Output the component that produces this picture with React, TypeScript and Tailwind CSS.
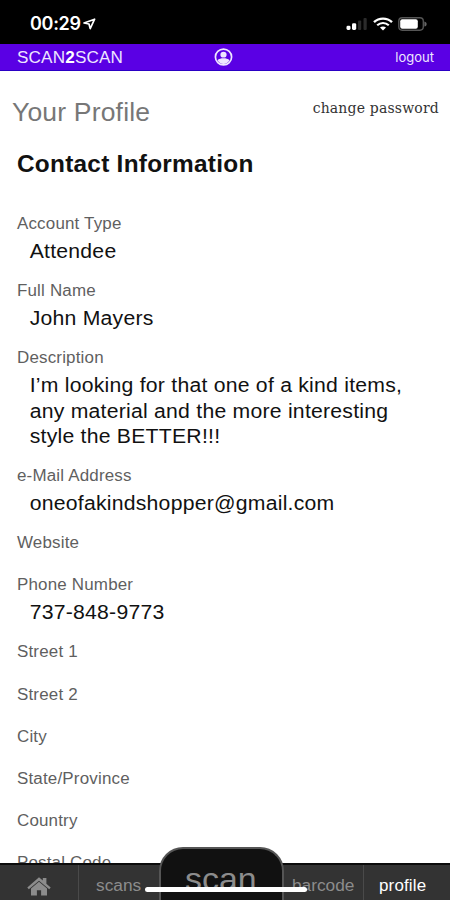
import React from 'react';

type Field = {
  label: string;
  lines?: string[];
};

const fields: Field[] = [
  { label: 'Account Type', lines: ['Attendee'] },
  { label: 'Full Name', lines: ['John Mayers'] },
  {
    label: 'Description',
    lines: [
      'I’m looking for that one of a kind items,',
      'any material and the more interesting',
      'style the BETTER!!!',
    ],
  },
  { label: 'e-Mail Address', lines: ['oneofakindshopper@gmail.com'] },
  { label: 'Website' },
  { label: 'Phone Number', lines: ['737-848-9773'] },
  { label: 'Street 1' },
  { label: 'Street 2' },
  { label: 'City' },
  { label: 'State/Province' },
  { label: 'Country' },
  { label: 'Postal Code' },
];

function StatusBar() {
  return (
    <div className="h-11 shrink-0 bg-black text-white flex items-center justify-between pl-[30px] pr-[22px] pt-[3px]">
      <div className="flex items-center gap-[4px]">
        <span className="inline-block w-[49px] whitespace-nowrap font-['Inter',sans-serif] font-semibold text-[18px] leading-none tracking-[-0.3px]">
          00:29
        </span>
        <svg width="13" height="12" viewBox="0 0 13 12">
          <path
            d="M1 5 11.6 1.2 7.2 10.6 6 6z"
            fill="none"
            stroke="#fff"
            strokeWidth="1.7"
            strokeLinejoin="round"
          />
        </svg>
      </div>
      <div className="flex items-center">
        <svg width="22" height="14" viewBox="0 0 22 14">
          <rect x="0.5" y="8.7" width="4" height="4.3" rx="1.4" fill="#fff" />
          <rect x="6" y="6.2" width="4.2" height="6.8" rx="1.4" fill="#fff" />
          <rect x="12" y="3.5" width="3.2" height="9.5" rx="1" fill="#2b2b2b" />
          <rect x="17.5" y="1" width="3.2" height="12" rx="1" fill="#2b2b2b" />
        </svg>
        <svg width="20" height="14" viewBox="0 0 20 14" className="ml-[5px]">
          <path d="M1 5.2C6 .4 14 .4 19 5.2" fill="none" stroke="#fff" strokeWidth="2.4" />
          <path d="M4.2 8.3c3.4-3.1 8.2-3.1 11.6 0" fill="none" stroke="#fff" strokeWidth="2.2" />
          <path d="M7 10.6c1.8-1.5 4.2-1.5 6 0L10 13.4z" fill="#fff" />
        </svg>
        <svg width="30" height="14" viewBox="0 0 30 14" className="ml-[5px]">
          <rect x="0.8" y="0.8" width="24.5" height="12.4" rx="3.4" fill="none" stroke="#555" strokeWidth="1.4" />
          <rect x="2.2" y="2.2" width="17.6" height="9.6" rx="2" fill="#fff" />
          <path d="M26.4 4.4c3 .8 3 4.4 0 5.2z" fill="#666" />
        </svg>
      </div>
    </div>
  );
}

function Header() {
  return (
    <div className="h-[27px] shrink-0 bg-[#5a00e4] border-b border-[#2a00c4] text-[#eee6ff] grid grid-cols-3 items-center pl-[17px] pr-4">
      <span className="w-fit origin-left scale-x-[1.07] text-[16px] leading-none tracking-[0.15px] pt-px">
        SCAN<b className="text-white">2</b>SCAN
      </span>
      <svg width="19" height="18" viewBox="0 0 19 18" className="justify-self-center -translate-x-[2px]">
        <ellipse cx="9.5" cy="9" rx="8.1" ry="7.8" fill="none" stroke="#eee6ff" strokeWidth="1.7" />
        <ellipse cx="9.5" cy="6.7" rx="3.1" ry="2.9" fill="#eee6ff" />
        <path d="M3.4 12.3c3-2.6 9.2-2.6 12.2 0-2.6 4.9-9.6 4.9-12.2 0z" fill="#eee6ff" />
      </svg>
      <span className="justify-self-end font-['Inter',sans-serif] text-[13px] leading-none">
        logout
      </span>
    </div>
  );
}

function ProfileField({ label, lines }: Field) {
  return (
    <div className={lines ? 'mb-[18.9px]' : 'mb-[26.1px]'}>
      <p className="text-[16px] leading-[16px] tracking-[0.17px] text-[#5f5f5f]">
        {label}
      </p>
      {lines && (
        <div className="mt-[7.1px] pl-[12px] text-[20px] leading-[25.2px] tracking-[0.22px] text-[#111]">
          {lines.map((line) => (
            <p key={line} className="whitespace-nowrap">
              {line}
            </p>
          ))}
        </div>
      )}
    </div>
  );
}

function BottomNav() {
  return (
    <div className="relative h-[37px] shrink-0 bg-[#333] border-t-2 border-[#0c0c0c] flex text-[#8c8c8c] text-[16px] leading-none">
      <div className="w-[79px] border-r border-[#4a4a4a] flex justify-center pt-[12px]">
        <svg width="24" height="19" viewBox="0 0 24 19" fill="#8c8c8c">
          <path d="M12 .3 15.8 3.6V1h3.6v5.8l4.3 3.7-1.5 1.8L12 3.7 1.8 12.3.3 10.5z" />
          <path d="M12 4.7l8 6.9V18.4h-5.9v-5.2H9.9v5.2H4v-6.8z" />
        </svg>
      </div>
      <div className="w-[81px] pl-[17px] pt-[13px]">
        <span className="inline-block origin-left scale-x-[1.08]">scans</span>
      </div>
      <div className="w-[122px]" />
      <div className="w-[82px] border-r border-[#4a4a4a] pl-[10px] pt-[13px]">
        <span className="inline-block origin-left scale-x-[1.08]">barcode</span>
      </div>
      <div className="flex-1 pl-[15px] pt-[13px] text-white">
        <span className="inline-block origin-left scale-x-[1.06] tracking-[0.15px]">
          profile
        </span>
      </div>

      {/* raised scan button */}
      <div className="absolute left-[159px] bottom-0 w-[125px] h-[53px] rounded-t-[24px] border-2 border-b-0 border-[#555] bg-[#111] flex justify-center overflow-hidden">
        <span className="scale-x-[1.06] -translate-x-px text-[32px] leading-none pt-[14px] text-[#8c8c8c]">
          scan
        </span>
      </div>
      {/* home indicator */}
      <div className="absolute left-[145px] bottom-[8px] w-[162px] h-[5px] rounded-full bg-white" />
    </div>
  );
}

function App() {
  return (
    <div className="w-[450px] h-[900px] overflow-hidden bg-white flex flex-col font-['Liberation_Sans',Arial,sans-serif]">
      <StatusBar />
      <Header />
      <main className="flex-1 min-h-0 overflow-hidden">
        <div className="flex justify-between pl-3 pr-[11px] pt-[27px] h-[79px]">
          <h1 className="origin-left scale-x-[1.06] -mt-px text-[25px] leading-[30px] tracking-[0.17px] text-[#777]">
            Your Profile
          </h1>
          <a className="font-['DejaVu_Serif',serif] text-[14px] leading-[20px] tracking-[0.18px] text-[#333]">
            change password
          </a>
        </div>
        <div className="w-[424px] pl-[16px] origin-left scale-x-[1.06]">
          <h2 className="text-[23px] leading-[28px] tracking-[0.25px] font-bold text-[#111] mb-[38px]">
            Contact Information
          </h2>
          {fields.map((field) => (
            <ProfileField key={field.label} {...field} />
          ))}
        </div>
      </main>
      <BottomNav />
    </div>
  );
}

export default App;
